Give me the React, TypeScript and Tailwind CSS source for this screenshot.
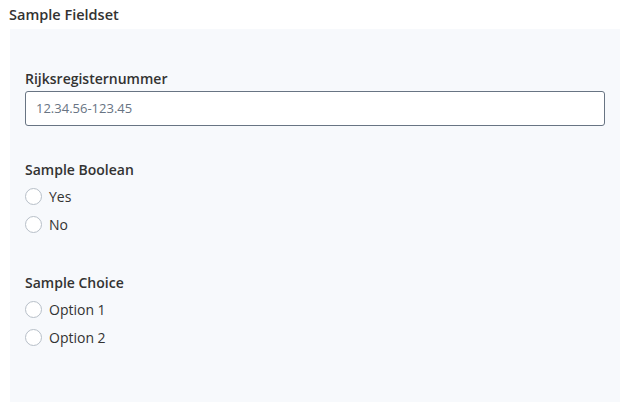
import React from "react";

function Radio({ label, name }: { label: string; name: string }) {
  return (
    <label className="flex items-center h-[28px] text-[14px] text-[#333332]">
      <span className="w-[17px] h-[17px] rounded-full border border-[#b7bfc8] bg-white mr-[7px]" />
      <span>{label}</span>
      <input type="radio" name={name} className="hidden" />
    </label>
  );
}

export default function App() {
  return (
    <div className="bg-white w-[633px] h-[418px]" style={{ fontFamily: '"Open Sans", "Noto Sans", sans-serif' }}>
      <div className="pl-[9px] pt-[5px] text-[14.5px] leading-[20px] text-[#333332] font-semibold">Sample Fieldset</div>
      <div className="ml-[10px] mt-[4px] w-[610px] h-[373px] bg-[#f7f9fc] px-[15px] pt-[40px]">
        <div className="text-[14px] leading-[20px] font-semibold text-[#333332]">Rijksregisternummer</div>
        <div className="mt-[2px] h-[35px] w-[580px] rounded-[3px] border border-[#687483] bg-white flex items-center px-[10px] text-[13px] text-[#687483]">
          12.34.56-123.45
        </div>
        <div className="mt-[34px] text-[14px] leading-[20px] font-semibold text-[#333332]">Sample Boolean</div>
        <div className="mt-[2px]">
          <Radio label="Yes" name="b" />
          <Radio label="No" name="b" />
        </div>
        <div className="mt-[35px] text-[14px] leading-[20px] font-semibold text-[#333332]">Sample Choice</div>
        <div className="mt-[2px]">
          <Radio label="Option 1" name="c" />
          <Radio label="Option 2" name="c" />
        </div>
      </div>
    </div>
  );
}
